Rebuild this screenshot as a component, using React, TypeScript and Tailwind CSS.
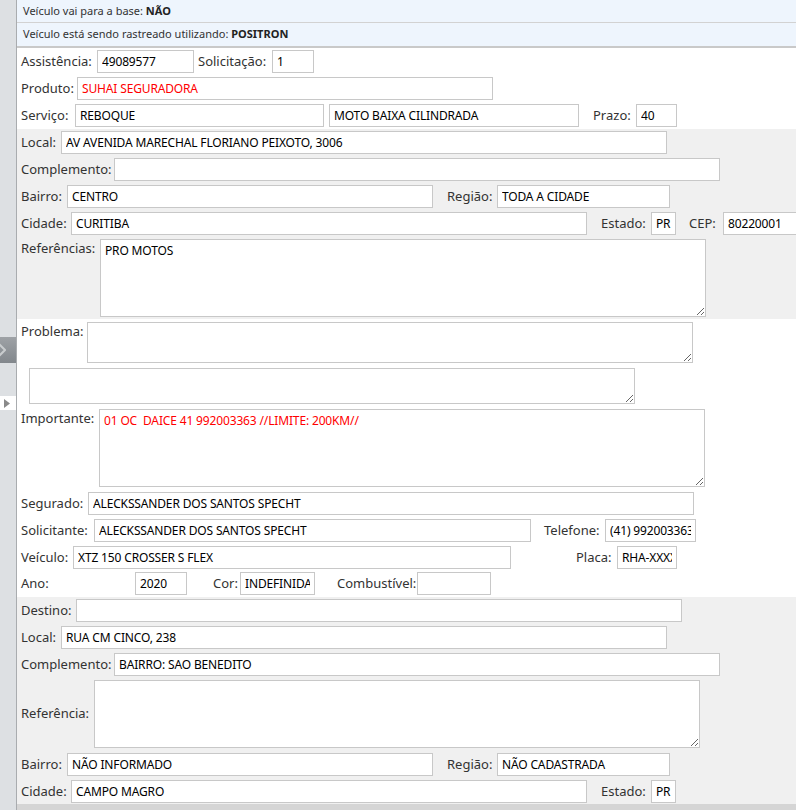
import React from "react";

const INP =
  "h-[23px] shrink-0 border border-[#c8c8c8] bg-white px-[4px] text-[12px] tracking-[-0.15px] outline-none font-['Noto_Sans',sans-serif]";
const TA =
  "shrink-0 border border-[#c8c8c8] bg-white px-[4px] pt-[3px] text-[12px] tracking-[-0.15px] leading-[16px] outline-none font-['Noto_Sans',sans-serif]";

function L({ className = "", children }: { className?: string; children: React.ReactNode }) {
  return (
    <span className={"shrink-0 whitespace-nowrap pb-[2px] text-[13px] leading-[16px] text-[#333333] " + className}>
      {children}
    </span>
  );
}

function I({ className = "", value = "", red = false }: { className?: string; value?: string; red?: boolean }) {
  return (
    <input
      readOnly
      value={value}
      className={INP + " " + (red ? "text-[#ff0000] " : "text-black ") + className}
    />
  );
}

export default function App() {
  return (
    <div className="flex min-h-screen w-full overflow-hidden bg-white font-['Noto_Sans',sans-serif]">
      {/* left strip */}
      <div className="flex w-[17px] shrink-0 flex-col border-r border-[#a9acaf] bg-[#dde0e3]">
        <div className="mt-[337px] flex h-[26px] w-[16px] items-center overflow-hidden bg-gradient-to-b from-[#9ea2a6] to-[#82878c]">
          <svg width="8" height="14" viewBox="0 0 8 14" className="-ml-[2px]">
            <polyline points="1,1 7,7 1,13" fill="none" stroke="#c9ccce" strokeWidth="2" />
          </svg>
        </div>
        <div className="mt-[33px] flex h-[14px] w-[16px] items-center bg-white pl-[4px]">
          <svg width="6" height="9" viewBox="0 0 6 9">
            <polygon points="0,0 6,4.5 0,9" fill="#8a8a8a" />
          </svg>
        </div>
      </div>

      {/* main */}
      <div className="flex min-w-0 flex-1 flex-col">
        {/* header */}
        <div className="flex h-[23px] items-center border-b border-[#d2d2d2] bg-[#eef5fd] pl-[6px] text-[11px] text-[#333333]">
          <span>
            Veículo vai para a base: <b className="text-[#222222]">NÃO</b>
          </span>
        </div>
        <div className="flex h-[25px] items-center border-b-2 border-[#c9c9c9] bg-[#eef5fd] pl-[6px] text-[11px] text-[#333333]">
          <span>
            Veículo está sendo rastreado utilizando: <b className="text-[#222222]">POSITRON</b>
          </span>
        </div>

        {/* section A */}
        <div className="flex flex-col gap-[4px] bg-white py-[2px] pl-[4px]">
          <div className="flex items-center">
            <L className="w-[76px]">Assistência:</L>
            <I className="w-[97px]" value="49089577" />
            <L className="ml-[4px] w-[74px]">Solicitação:</L>
            <I className="w-[42px]" value="1" />
          </div>
          <div className="flex items-center">
            <L className="w-[56px]">Produto:</L>
            <I className="w-[416px]" value="SUHAI SEGURADORA" red />
          </div>
          <div className="flex items-center">
            <L className="w-[54px]">Serviço:</L>
            <I className="w-[249px]" value="REBOQUE" />
            <I className="ml-[5px] w-[250px]" value="MOTO BAIXA CILINDRADA" />
            <L className="ml-[14px] w-[43px]">Prazo:</L>
            <I className="w-[41px]" value="40" />
          </div>
        </div>

        {/* section B */}
        <div className="flex flex-col gap-[4px] bg-[#f0f0f0] py-[2px] pl-[4px]">
          <div className="flex items-center">
            <L className="w-[40px]">Local:</L>
            <I className="w-[606px]" value="AV AVENIDA MARECHAL FLORIANO PEIXOTO, 3006" />
          </div>
          <div className="flex items-center">
            <L className="w-[93px]">Complemento:</L>
            <I className="w-[606px]" value="" />
          </div>
          <div className="flex items-center">
            <L className="w-[46px]">Bairro:</L>
            <I className="w-[366px]" value="CENTRO" />
            <L className="ml-[14px] w-[50px]">Região:</L>
            <I className="w-[173px]" value="TODA A CIDADE" />
          </div>
          <div className="flex items-center">
            <L className="w-[50px]">Cidade:</L>
            <I className="w-[516px]" value="CURITIBA" />
            <L className="ml-[14px] w-[50px]">Estado:</L>
            <I className="w-[25px]" value="PR" />
            <L className="ml-[13px] w-[34px]">CEP:</L>
            <I className="w-[90px]" value="80220001" />
          </div>
          <div className="flex items-start">
            <L className="w-[79px] pt-[1px]">Referências:</L>
            <textarea readOnly value="PRO MOTOS" className={TA + " h-[78px] w-[606px] text-black"} />
          </div>
        </div>

        {/* section C */}
        <div className="flex flex-col bg-white pb-[2px] pl-[4px]">
          <div className="mt-[3px] flex items-start">
            <L className="w-[66px] pt-[1px]">Problema:</L>
            <textarea readOnly value="" className={TA + " h-[41px] w-[606px] text-black"} />
          </div>
          <div className="mt-[5px] flex items-start">
            <textarea readOnly value="" className={TA + " ml-[8px] h-[36px] w-[606px] text-black"} />
          </div>
          <div className="mt-[5px] flex items-start">
            <L className="w-[78px] pt-[1px]">Importante:</L>
            <textarea
              readOnly
              value="01 OC  DAICE 41 992003363 //LIMITE: 200KM//"
              className={TA + " h-[78px] w-[606px] text-[#ff0000]"}
            />
          </div>
          <div className="mt-[5px] flex items-center">
            <L className="w-[67px]">Segurado:</L>
            <I className="w-[606px]" value="ALECKSSANDER DOS SANTOS SPECHT" />
          </div>
          <div className="mt-[4px] flex items-center">
            <L className="w-[73px]">Solicitante:</L>
            <I className="w-[437px]" value="ALECKSSANDER DOS SANTOS SPECHT" />
            <L className="ml-[13px] w-[61px]">Telefone:</L>
            <I className="w-[91px]" value="(41) 992003363" />
          </div>
          <div className="mt-[4px] flex items-center">
            <L className="w-[52px]">Veículo:</L>
            <I className="w-[438px]" value="XTZ 150 CROSSER S FLEX" />
            <L className="ml-[65px] w-[41px]">Placa:</L>
            <I className="w-[60px]" value="RHA-XXXX" />
          </div>
          <div className="mt-[3px] flex items-center">
            <L className="w-[114px]">Ano:</L>
            <I className="w-[52px]" value="2020" />
            <L className="ml-[26px] w-[27px]">Cor:</L>
            <I className="w-[75px]" value="INDEFINIDA" />
            <L className="ml-[22px] w-[80px]">Combustível:</L>
            <I className="w-[74px]" value="" />
          </div>
        </div>

        {/* section D */}
        <div className="flex flex-col gap-[4px] bg-[#f0f0f0] pb-[1px] pt-[2px] pl-[4px]">
          <div className="flex items-center">
            <L className="w-[55px]">Destino:</L>
            <I className="w-[606px]" value="" />
          </div>
          <div className="flex items-center">
            <L className="w-[40px]">Local:</L>
            <I className="w-[606px]" value="RUA CM CINCO, 238" />
          </div>
          <div className="flex items-center">
            <L className="w-[93px]">Complemento:</L>
            <I className="w-[606px]" value="BAIRRO: SAO BENEDITO" />
          </div>
          <div className="flex items-center">
            <L className="w-[73px]">Referência:</L>
            <textarea readOnly value="" className={TA + " h-[68px] w-[606px] text-black"} />
          </div>
          <div className="mt-[1px] flex items-center">
            <L className="w-[46px]">Bairro:</L>
            <I className="w-[366px]" value="NÃO INFORMADO" />
            <L className="ml-[14px] w-[50px]">Região:</L>
            <I className="w-[173px]" value="NÃO CADASTRADA" />
          </div>
          <div className="flex items-center">
            <L className="w-[50px]">Cidade:</L>
            <I className="w-[516px]" value="CAMPO MAGRO" />
            <L className="ml-[14px] w-[50px]">Estado:</L>
            <I className="w-[25px]" value="PR" />
          </div>
        </div>
        <div className="h-[20px] bg-[#d5d5d5]" />
      </div>
    </div>
  );
}
